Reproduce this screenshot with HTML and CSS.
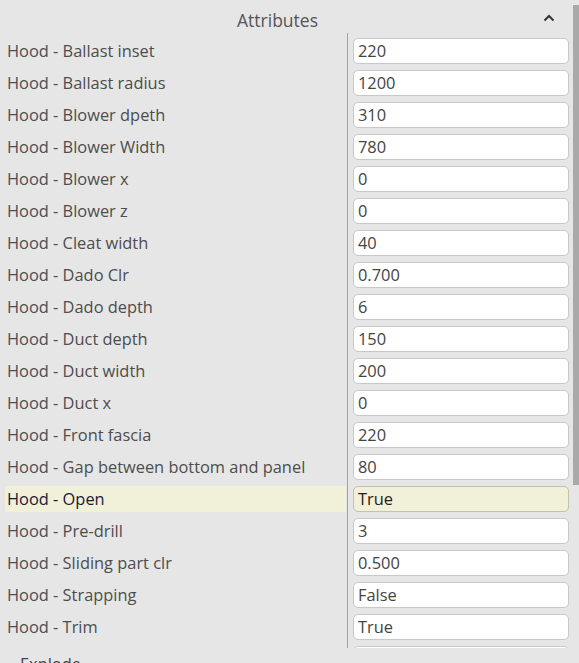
FILE: index.html
```html
<!DOCTYPE html>
<html lang="en">
<head>
  <meta charset="UTF-8" />
  <meta name="viewport" content="width=device-width, initial-scale=1.0" />
  <title>Attributes</title>
  <link rel="stylesheet" href="styles.css">
</head>
<body>
  <section class="panel">
    <div class="panel-header">
      <div class="panel-title">Attributes</div>
      <div class="panel-toggle">
        <svg width="12" height="8" viewBox="0 0 12 8"><path d="M1.5 6.5 L6 2 L10.5 6.5" fill="none" stroke="#333" stroke-width="2"/></svg>
      </div>
    </div>

    <div class="attr-list">
      <div class="attr-names">
        <div class="attr-name">Hood - Ballast inset</div>
        <div class="attr-name">Hood - Ballast radius</div>
        <div class="attr-name">Hood - Blower dpeth</div>
        <div class="attr-name">Hood - Blower Width</div>
        <div class="attr-name">Hood - Blower x</div>
        <div class="attr-name">Hood - Blower z</div>
        <div class="attr-name">Hood - Cleat width</div>
        <div class="attr-name">Hood - Dado Clr</div>
        <div class="attr-name">Hood - Dado depth</div>
        <div class="attr-name">Hood - Duct depth</div>
        <div class="attr-name">Hood - Duct width</div>
        <div class="attr-name">Hood - Duct x</div>
        <div class="attr-name">Hood - Front fascia</div>
        <div class="attr-name">Hood - Gap between bottom and panel</div>
        <div class="attr-name selected">Hood - Open</div>
        <div class="attr-name">Hood - Pre-drill</div>
        <div class="attr-name">Hood - Sliding part clr</div>
        <div class="attr-name">Hood - Strapping</div>
        <div class="attr-name">Hood - Trim</div>
      </div>
      <div class="attr-values">
        <div class="attr-value">220</div>
        <div class="attr-value">1200</div>
        <div class="attr-value">310</div>
        <div class="attr-value">780</div>
        <div class="attr-value">0</div>
        <div class="attr-value">0</div>
        <div class="attr-value">40</div>
        <div class="attr-value">0.700</div>
        <div class="attr-value">6</div>
        <div class="attr-value">150</div>
        <div class="attr-value">200</div>
        <div class="attr-value">0</div>
        <div class="attr-value">220</div>
        <div class="attr-value">80</div>
        <div class="attr-value selected">True</div>
        <div class="attr-value">3</div>
        <div class="attr-value">0.500</div>
        <div class="attr-value">False</div>
        <div class="attr-value">True</div>
        <div class="attr-value"></div>
      </div>
    </div>

    <div class="panel-section">Explode</div>
  </section>

  <!-- scrollbar thumb -->
  <div class="scroll-thumb"></div>
</body>
</html>
```

FILE: styles.css
```css
/* Basic Reset */
* { margin: 0; padding: 0; box-sizing: border-box; }
html, body { height: 100%; overflow: hidden; }
body {
  font-family: "Open Sans", "Noto Sans", Arial, sans-serif;
  font-size: 16.4px;
  color: #4d4d4d;
  background: #e6e6e6;
}
.panel {
  width: 100%;
}
.panel-header {
  display: flex;
  align-items: center;
  height: 33px;
  padding-top: 6px;
}
.panel-title {
  flex: 1;
  text-align: center;
  padding-left: 18px;
  font-size: 17.5px;
  color: #555;
}
.panel-toggle {
  width: 24px;
  margin-right: 18px;
  display: flex;
  justify-content: center;
  padding-bottom: 4px;
}
/* Property grid */
.attr-list {
  display: flex;
  height: 615px;
  overflow: hidden;
}
.attr-names {
  width: 347px;
  padding: 5px 1px 0 5px;
  display: flex;
  flex-direction: column;
  gap: 6px;
}
.attr-name {
  height: 26px;
  line-height: 25px;
  padding-left: 2px;
  white-space: nowrap;
  flex-shrink: 0;
}
.attr-name.selected {
  background: #f1f0d8;
  color: #1a1a3a;
}
.attr-values {
  width: 226px;
  border-left: 1px solid #a3a3a3;
  padding: 5px 4px 0 5px;
  display: flex;
  flex-direction: column;
  gap: 6px;
}
.attr-value {
  height: 26px;
  line-height: 24px;
  padding-left: 4px;
  background: #fff;
  border: 1px solid #c8c8c8;
  border-radius: 5px;
  color: #444;
  flex-shrink: 0;
}
.attr-value.selected {
  background: #f1f0d8;
  border-color: #c3c1a6;
  color: #2a1a1a;
}
.panel-section {
  padding: 4px 0 0 20px;
  color: #444;
}
/* Scrollbar thumb */
.scroll-thumb {
  position: absolute;
  top: 5px;
  right: 0;
  width: 6px;
  height: 480px;
  background: #a9a9a9;
}
```
